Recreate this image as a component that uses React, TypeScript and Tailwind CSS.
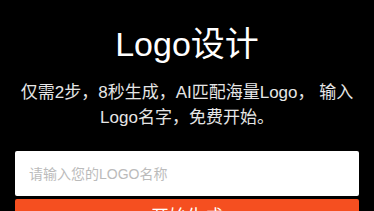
export default function App() {
  return (
    <div
      className="w-[374px] h-[211px] overflow-hidden bg-black flex flex-col items-center"
      style={{ fontFamily: '"Liberation Sans", "Noto Sans CJK SC", sans-serif' }}
    >
      <h1 className="mt-[24px] text-[34px] leading-[40px] text-white font-normal">
        Logo设计
      </h1>
      <p className="mt-[16px] px-[16px] text-center text-[17px] leading-[25px] text-[#e6e6e6]">
        仅需2步，8秒生成，AI匹配海量Logo， 输入
        <br />
        Logo名字，免费开始。
      </p>
      <div className="mt-[21px] w-[344px] flex flex-col gap-[3px]">
        <input
          type="text"
          placeholder="请输入您的LOGO名称"
          className="h-[45px] w-full rounded-[2px] bg-white px-[14px] text-[14px] text-[#333] placeholder:text-[#bbbbbb] outline-none"
        />
        <button className="h-[36px] w-full rounded-[2px] bg-[#f54f20] text-[18px] text-white">
          开始生成
        </button>
      </div>
    </div>
  );
}
